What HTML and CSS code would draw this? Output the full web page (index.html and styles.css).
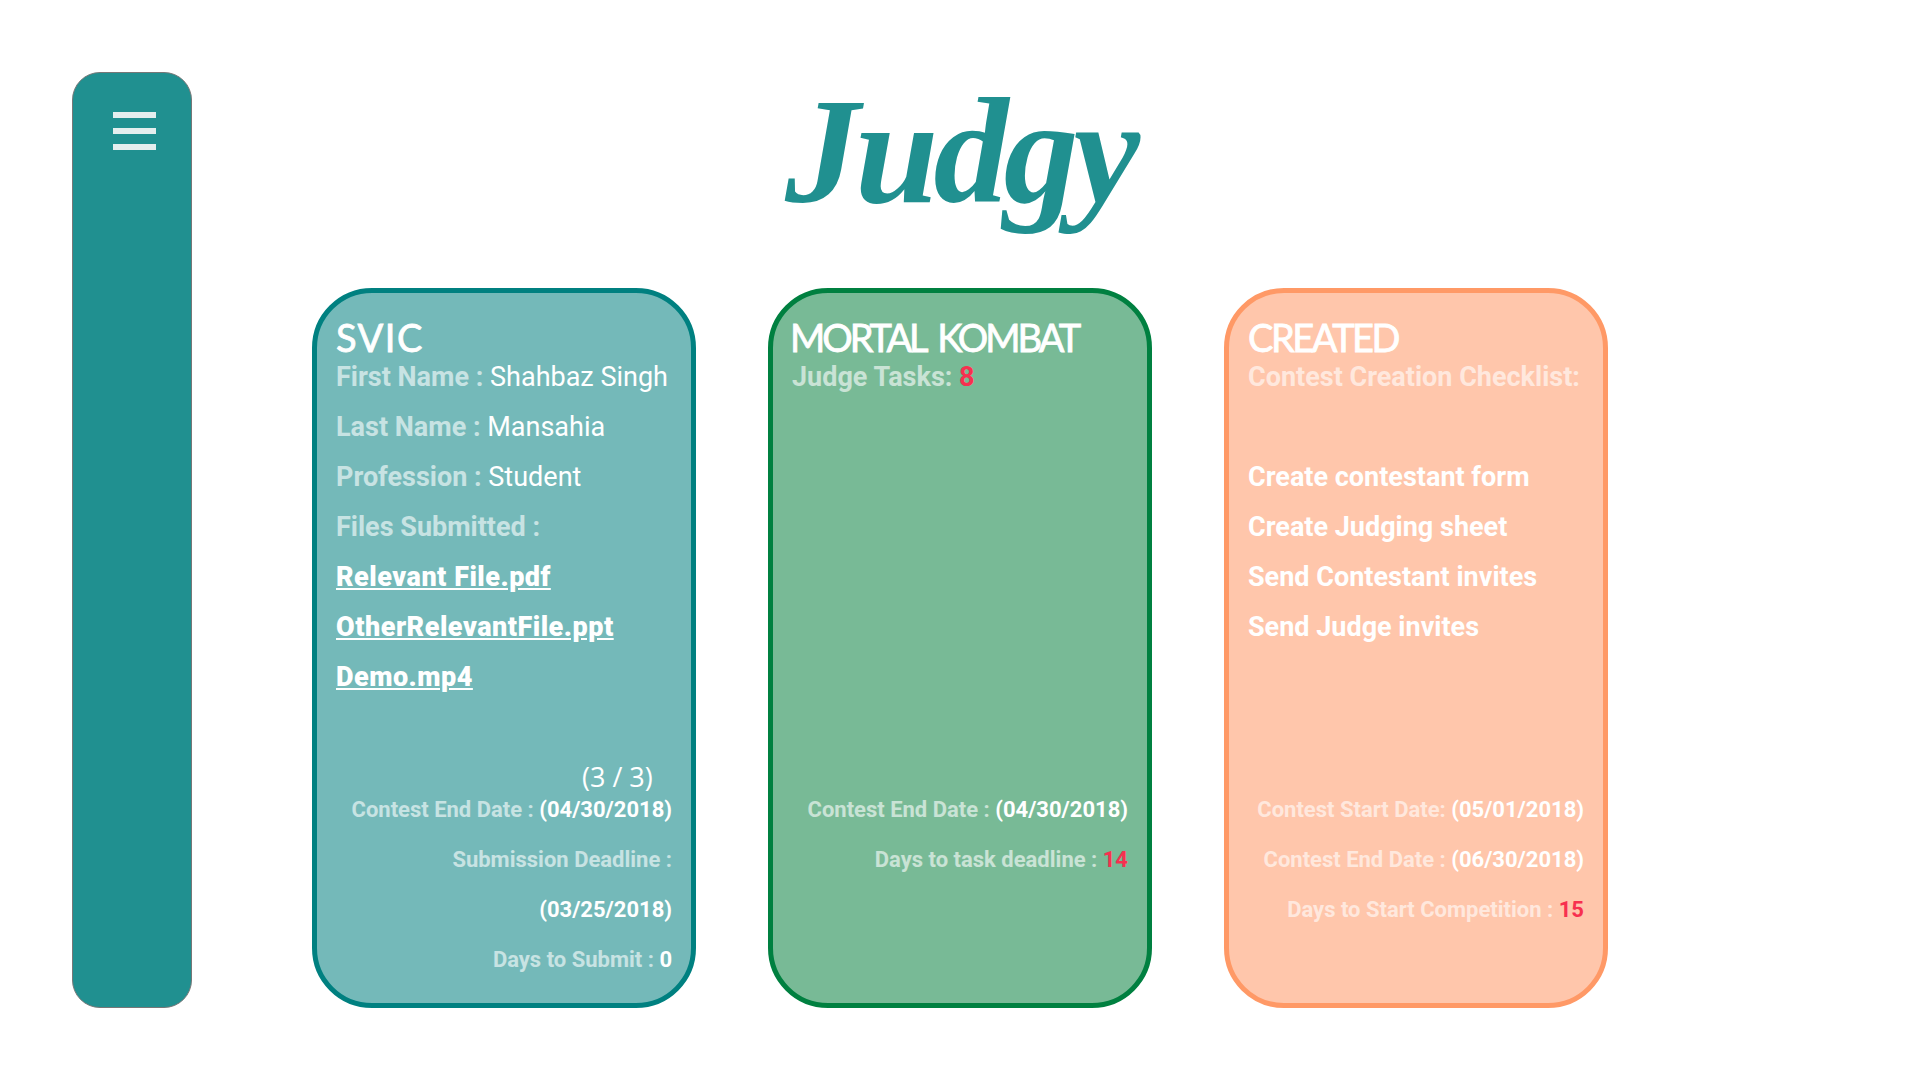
FILE: index.html
```html
<!DOCTYPE html>
<html lang="en">
<head>
    <meta charset="UTF-8">
    <title>Judgy | Dashboard</title>
    <link rel="stylesheet" href="styles.css">
</head>
<body>
    <aside class="sidebar">
        <button class="menu-button" aria-label="Menu">
            <span></span>
            <span></span>
            <span></span>
        </button>
    </aside>

    <main class="content">
        <h1 class="logo">Judgy</h1>

        <div class="cards">
            <section class="card card-teal">
                <h2 class="wide">SVIC</h2>
                <div class="card-body">
                    <p><b>First Name :</b> Shahbaz Singh</p>
                    <p><b>Last Name :</b> Mansahia</p>
                    <p><b>Profession :</b> Student</p>
                    <p><b>Files Submitted :</b></p>
                    <p><a href="#">Relevant File.pdf</a></p>
                    <p><a href="#">OtherRelevantFile.ppt</a></p>
                    <p><a href="#">Demo.mp4</a></p>
                    <div class="pager">(3 / 3)</div>
                </div>
                <div class="card-footer">
                    <p><b>Contest End Date :</b> <strong>(04/30/2018)</strong></p>
                    <p><b>Submission Deadline :</b></p>
                    <p><strong>(03/25/2018)</strong></p>
                    <p><b>Days to Submit :</b> <strong>0</strong></p>
                </div>
            </section>

            <section class="card card-green">
                <h2 class="narrow">MORTAL KOMBAT</h2>
                <div class="card-body">
                    <p><b>Judge Tasks:</b> <strong class="count">8</strong></p>
                </div>
                <div class="card-footer">
                    <p><b>Contest End Date :</b> <strong>(04/30/2018)</strong></p>
                    <p><b>Days to task deadline :</b> <strong class="count">14</strong></p>
                </div>
            </section>

            <section class="card card-orange">
                <h2 class="tight">CREATED</h2>
                <div class="card-body">
                    <p><b>Contest Creation Checklist:</b></p>
                    <p>&nbsp;</p>
                    <p><strong>Create contestant form</strong></p>
                    <p><strong>Create Judging sheet</strong></p>
                    <p><strong>Send Contestant invites</strong></p>
                    <p><strong>Send Judge invites</strong></p>
                </div>
                <div class="card-footer">
                    <p><b>Contest Start Date:</b> <strong>(05/01/2018)</strong></p>
                    <p><b>Contest End Date :</b> <strong>(06/30/2018)</strong></p>
                    <p><b>Days to Start Competition :</b> <strong class="count">15</strong></p>
                </div>
            </section>
        </div>
    </main>
</body>
</html>
```

FILE: styles.css
```css
* {
    box-sizing: border-box;
}

body {
    display: flex;
    margin: 0;
    padding: 72px;
    height: 1080px;
    overflow: hidden;
    background-color: #fff;
    color: #fff;
    font-family: Roboto, sans-serif;
}

.sidebar {
    flex: 0 0 120px;
    height: 936px;
    padding: 39px 0 0 40px;
    background-color: #209090;
    border: 1px solid #777;
    border-radius: 28px;
}

.menu-button {
    display: flex;
    flex-direction: column;
    gap: 10px;
    width: 43px;
    padding: 0;
    border: none;
    background: none;
}

.menu-button span {
    display: block;
    height: 6px;
    background-color: #e4eeee;
}

.content {
    flex: 0 0 1536px;
}

.logo {
    height: 216px;
    margin: 0;
    color: #209090;
    font-family: "Liberation Serif", serif;
    font-size: 150px;
    font-style: italic;
    font-weight: bold;
    letter-spacing: -5px;
    line-height: 158px;
    text-align: center;
}

.cards {
    display: flex;
    justify-content: center;
    gap: 72px;
}

.card {
    width: 384px;
    height: 720px;
    padding: 24px 19px 0;
    border: 5px solid;
    border-radius: 60px;
}

.card-teal {
    background-color: #74b9b9;
    border-color: #008080;
}

.card-green {
    background-color: #78ba96;
    border-color: #008040;
}

.card-orange {
    background-color: #ffc6ab;
    border-color: #ff9966;
}

.card h2 {
    height: 35px;
    margin: 0;
    font-family: Lato, sans-serif;
    font-size: 38px;
    font-weight: 400;
    line-height: 40px;
    -webkit-text-stroke: .8px #fff;
}

.card h2.wide {
    letter-spacing: 1.5px;
}

.card h2.narrow {
    margin-left: -2px;
    letter-spacing: -3px;
    word-spacing: 6px;
}

.card h2.tight {
    letter-spacing: -2.5px;
}

.card p {
    margin: 0;
    line-height: 50px;
    white-space: nowrap;
}

.card b {
    font-weight: 700;
    opacity: .6;
}

.card strong {
    font-weight: 700;
}

.card a {
    color: #fff;
    font-weight: 900;
    letter-spacing: .5px;
}

.card-body {
    display: flex;
    flex-direction: column;
    height: 433px;
    font-size: 27px;
}

.pager {
    margin: auto 0 0 246px;
    font-family: "Open Sans", sans-serif;
    font-size: 27px;
    font-weight: 400;
    line-height: 17px;
    white-space: nowrap;
}

.card-footer {
    font-size: 22px;
    text-align: right;
}

.card .count {
    color: #f7304f;
}
```
